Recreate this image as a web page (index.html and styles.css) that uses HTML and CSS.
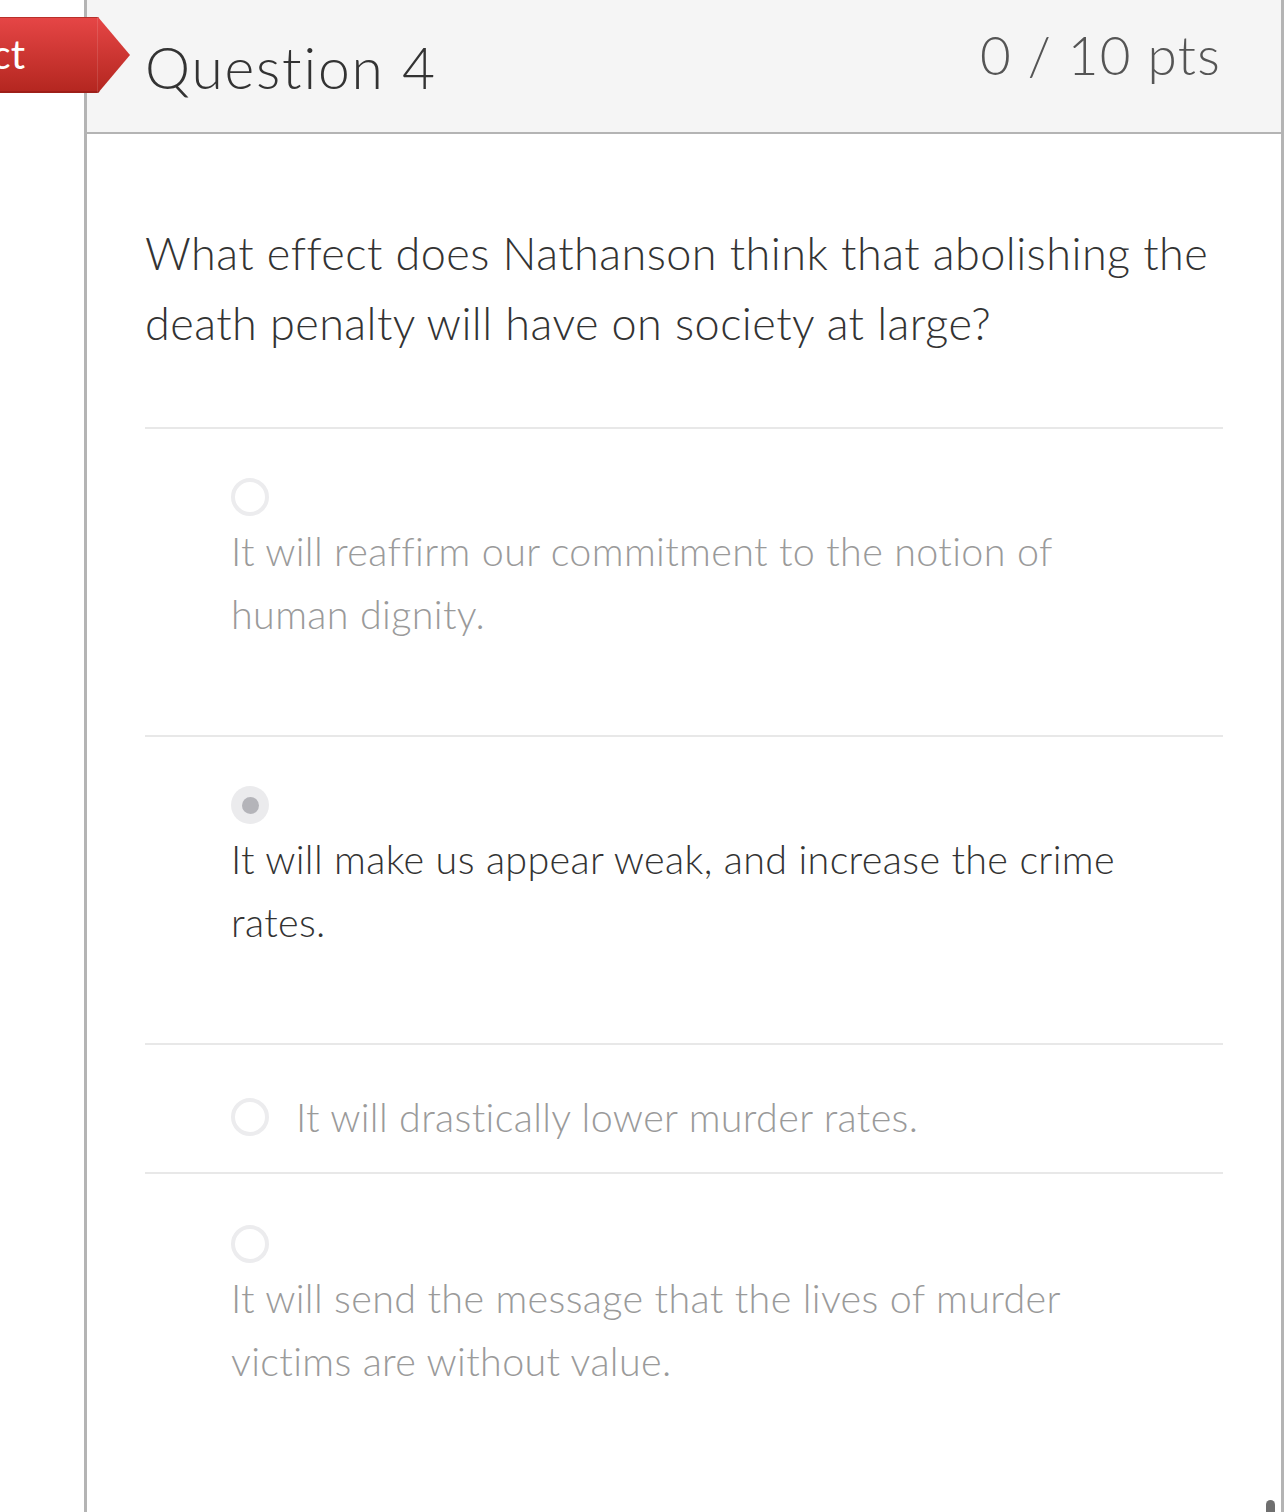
FILE: index.html
```html
<!DOCTYPE html>
<html>
<head>
<meta charset="utf-8">
<link rel="stylesheet" href="styles.css">
</head>
<body>
<div class="page">
  <div class="banner"><span class="banner-text">Incorrect</span><span class="banner-seam"></span></div>
  <div class="question">
    <div class="q-header">
      <h2 class="q-title">Question 4</h2>
      <div class="q-points">0 / 10 pts</div>
    </div>
    <div class="q-body">
      <p class="q-text">What effect does Nathanson think that abolishing the death penalty will have on society at large?</p>
      <div class="answers">
        <div class="answer stacked">
          <span class="radio"></span>
          <div class="answer-text">It will reaffirm our commitment to the notion of human dignity.</div>
        </div>
        <div class="answer stacked selected">
          <span class="radio checked"></span>
          <div class="answer-text">It will make us appear weak, and increase the crime rates.</div>
        </div>
        <div class="answer inline">
          <span class="radio"></span>
          <div class="answer-text">It will drastically lower murder rates.</div>
        </div>
        <div class="answer stacked">
          <span class="radio"></span>
          <div class="answer-text">It will send the message that the lives of murder victims are without value.</div>
        </div>
      </div>
    </div>
  </div>
  <div class="scroll-thumb"></div>
</div>
</body>
</html>
```

FILE: styles.css
```css
html, body {
  margin: 0;
  padding: 0;
  background: #ffffff;
}
body {
  font-family: Lato, "Open Sans", "Liberation Sans", sans-serif;
  color: #333333;
  overflow: hidden;
}
.page {
  position: relative;
  width: 1284px;
  height: 1512px;
  overflow: hidden;
  padding-left: 84px;
  box-sizing: border-box;
}
.question {
  height: 1512px;
  border-left: 3px solid #b4b4b4;
  border-right: 3px solid #b4b4b4;
  box-sizing: border-box;
}
.q-header {
  height: 134px;
  box-sizing: border-box;
  background: #f5f5f5;
  border-bottom: 2px solid #b4b4b4;
  display: flex;
  justify-content: space-between;
  align-items: flex-start;
  padding: 0 60px 0 58px;
}
.q-title {
  margin: 0;
  padding-top: 34px;
  font-size: 57px;
  font-weight: 300;
  line-height: 67px;
  color: #333333;
  letter-spacing: 1.8px;
}
.q-points {
  padding-top: 23px;
  font-size: 53px;
  font-weight: 300;
  line-height: 64px;
  color: #555555;
  letter-spacing: 1.3px;
}
.q-body {
  padding: 84px 58px 0 58px;
}
.q-text {
  margin: 0;
  font-size: 45px;
  line-height: 70px;
  font-weight: 300;
  color: #333333;
  letter-spacing: 0.46px;
}
.answers {
  margin-top: 69px;
}
.answer {
  border-top: 2px solid #e8e8e8;
  padding-left: 86px;
}
.answer.stacked {
  padding-top: 49px;
  padding-bottom: 90px;
  height: 308px;
  box-sizing: border-box;
}
.answer.inline {
  display: flex;
  align-items: center;
  gap: 27px;
  height: 129px;
  box-sizing: border-box;
  padding-top: 16px;
}
.answer:last-child.stacked {
  padding-top: 51px;
}
.radio {
  display: block;
  width: 38px;
  height: 38px;
  border-radius: 50%;
  border: 4px solid #ececee;
  box-sizing: border-box;
  flex: none;
  background: #ffffff;
}
.radio.checked {
  border: none;
  background: #ebebed;
  position: relative;
}
.radio.checked::after {
  content: "";
  position: absolute;
  left: 11px;
  top: 11px;
  width: 17px;
  height: 17px;
  border-radius: 50%;
  background: #b4b4b9;
}
.stacked .radio {
  margin-bottom: 3px;
}
.answer-text {
  font-size: 39.5px;
  line-height: 63px;
  color: #9a9a9a;
  font-weight: 300;
  letter-spacing: 0.35px;
  max-width: 920px;
}
.selected .answer-text {
  color: #333333;
}
.banner {
  position: absolute;
  left: 0;
  top: 17px;
  width: 130px;
  height: 76px;
  background: linear-gradient(#e64646, #b3261f);
  clip-path: polygon(0 0, 98px 0, 130px 38px, 98px 76px, 0 76px);
  box-shadow: inset 0 1px 0 #b8302a, inset 0 -2px 0 #9e1f19;
  overflow: hidden;
}
.banner-seam {
  position: absolute;
  left: 97px;
  top: 0;
  width: 1px;
  height: 76px;
  background: rgba(255, 255, 255, 0.12);
}
.banner-text {
  position: absolute;
  right: 105px;
  top: 13px;
  font-size: 40px;
  line-height: 48px;
  color: #ffffff;
  white-space: nowrap;
}
.scroll-thumb {
  position: absolute;
  left: 1266px;
  top: 1500px;
  width: 9px;
  height: 24px;
  border-radius: 5px;
  background: #6f6f6f;
}
```
